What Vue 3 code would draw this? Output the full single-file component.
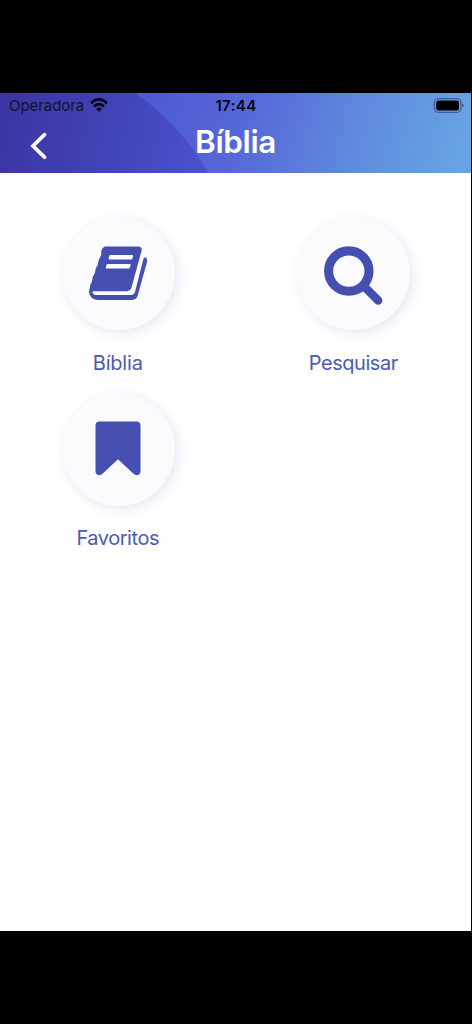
<script setup>
const items = [
  { label: 'Bíblia', icon: 'book', spacing: 'label-book' },
  { label: 'Pesquisar', icon: 'search', spacing: 'label-search' },
  { label: 'Favoritos', icon: 'bookmark', spacing: 'label-bookmark' },
]
</script>

<template>
  <div class="device">
    <div class="screen">
      <header class="header">
        <svg class="backdrop" viewBox="0 0 471 80" preserveAspectRatio="none" aria-hidden="true">
          <defs>
            <linearGradient id="sky" gradientUnits="userSpaceOnUse" x1="130" y1="0" x2="452" y2="86">
              <stop offset="0" stop-color="#4c58cf" />
              <stop offset="0.35" stop-color="#5668d9" />
              <stop offset="0.7" stop-color="#5f8bde" />
              <stop offset="1" stop-color="#67a3e2" />
            </linearGradient>
            <linearGradient id="deep" gradientUnits="userSpaceOnUse" x1="0" y1="20" x2="205" y2="75">
              <stop offset="0" stop-color="#3b34a3" />
              <stop offset="0.5" stop-color="#4143b7" />
              <stop offset="1" stop-color="#4a52cc" />
            </linearGradient>
          </defs>
          <rect width="471" height="80" fill="url(#sky)" />
          <path d="M0 0H135Q179 30 209 80H0Z" fill="url(#deep)" />
        </svg>
        <div class="status">
          <div class="carrier">
            <span class="operator">Operadora</span>
            <svg class="wifi" width="18" height="14" viewBox="0 0 20 14" preserveAspectRatio="none">
              <g fill="none" stroke="#05050f" stroke-width="2.7">
                <path d="M1.2 5.1Q10-2.3 18.8 5.1" />
                <path d="M4.3 8.4Q10 3.8 15.7 8.4" />
              </g>
              <path d="M6.7 10.7Q10 8.2 13.3 10.7L10 13.8Z" fill="#05050f" />
            </svg>
          </div>
          <span class="time">17:44</span>
          <svg class="battery" width="31" height="15" viewBox="0 0 31 15">
            <rect x="1.3" y=".7" width="26.6" height="13.6" rx="4" fill="none" stroke="#3f5c9d" stroke-width="1.3" />
            <rect x="3.2" y="2.6" width="22.8" height="9.8" rx="2.2" fill="#000" />
            <path d="M29.2 5.2Q30.7 6 30.7 7.5T29.2 9.8Z" fill="#3f5c9d" />
          </svg>
        </div>
        <div class="titlebar">
          <svg class="back" width="18" height="28" viewBox="0 0 18 28">
            <path d="M14.5 2.6L3 14L14.5 25.2" fill="none" stroke="#fff" stroke-width="3.7" stroke-linecap="round" stroke-linejoin="miter" />
          </svg>
          <h1>Bíblia</h1>
        </div>
      </header>
      <main class="grid">
        <div v-for="item in items" :key="item.icon" class="tile">
          <div class="disc">
            <svg v-if="item.icon === 'book'" width="60" height="56" viewBox="0 0 60 56" fill="#444fb0">
              <path fill-rule="evenodd" d="M17 1.4H50Q54.6 1.4 53.5 6L43.5 42.6Q42.5 46 39 46.2H6Q4 46.2 4.6 48Q5.2 50 8 50H43Q46 50 47 47L55.4 14Q56 12.2 57.4 12.6Q59.8 13.5 59 17L49.7 50.6Q48.5 54.9 44 54.9H10Q4 54.9 1.8 50Q.3 46 1.9 42.7Q1.8 39.9 3.2 38Q4.4 36.3 4.4 34.1Q4.4 31.7 5.8 30Q7.1 28.3 7.3 26Q7.4 23.3 8.8 21.6Q10 20 10.2 17.5Q10.4 14.5 11.8 13Q13.3 11.1 13.3 7.5Q13 5 14.5 3.4Q15.7 1.7 17 1.4ZM22.4 10.1Q21.5 10.1 21.2 11L20.7 13.4Q20.5 14.5 21.6 14.5H43.2Q44.2 14.5 44.4 13.6L45.1 11.2Q45.3 10.1 44.3 10.1ZM19.8 19.1Q18.8 19.1 18.5 20L17.8 22.5Q17.6 23.6 18.6 23.6H40.7Q41.6 23.6 41.9 22.6L42.6 20.2Q42.8 19.1 41.8 19.1Z" />
            </svg>
            <svg v-else-if="item.icon === 'search'" width="60" height="60" viewBox="0 0 60 60" fill="none" stroke="#444fb0">
              <circle cx="25.8" cy="26.1" r="20.2" stroke-width="9.1" />
              <path d="M40 40.3L55.2 55.5" stroke-width="8.4" stroke-linecap="round" />
            </svg>
            <svg v-else width="46" height="55" viewBox="0 0 46 55">
              <path d="M4.6 .6H41.4Q45.5 .6 45.5 4.7V50Q45.5 54 42 54.2Q40 54.2 38.2 52.6L23 38.3L7.8 52.6Q6 54.2 4 54.2Q.5 54 .5 50V4.7Q.5 .6 4.6 .6Z" fill="#444fb0" />
            </svg>
          </div>
          <span class="label" :class="item.spacing">{{ item.label }}</span>
        </div>
      </main>
    </div>
  </div>
</template>

<style>
body {
  background: #000;
}
</style>

<style scoped>
.device {
  box-sizing: border-box;
  width: 472px;
  height: 1024px;
  padding: 93px 1px 93px 0;
  background: #000;
  font-family: Inter, "Liberation Sans", sans-serif;
  overflow: hidden;
}
.screen {
  height: 838px;
  background: #fff;
}
.header {
  position: relative;
  height: 80px;
}
.backdrop {
  position: absolute;
  inset: 0;
  width: 471px;
  height: 80px;
}
.status {
  position: relative;
  display: grid;
  grid-template-columns: 1fr auto 1fr;
  align-items: center;
  height: 25px;
  padding: 0 7px 0 9px;
  color: #05050f;
}
.carrier {
  display: flex;
  align-items: center;
  gap: 6px;
}
.operator {
  font-size: 15px;
  letter-spacing: -0.06px;
  line-height: 25px;
  color: #12122e;
}
.wifi {
  display: block;
  margin-top: -1px;
}
.time {
  font-size: 15px;
  font-weight: 600;
  letter-spacing: 0.4px;
  line-height: 25px;
  margin-left: -1px;
}
.battery {
  display: block;
  justify-self: end;
  margin-top: -1px;
}
.titlebar {
  position: relative;
  display: grid;
  grid-template-columns: 60px 1fr 60px;
  height: 55px;
}
.back {
  margin: 14px 0 0 30px;
}
h1 {
  margin: 4px 0 0;
  font-size: 31.5px;
  font-weight: 600;
  line-height: 40px;
  letter-spacing: -0.4px;
  text-align: center;
  color: #fff;
}
.grid {
  display: grid;
  grid-template-columns: 1fr 1fr;
  grid-auto-rows: 175.5px;
  padding-top: 44px;
}
.tile {
  display: flex;
  flex-direction: column;
  align-items: center;
}
.disc {
  box-sizing: border-box;
  width: 113px;
  height: 113px;
  margin-left: 1px;
  padding: 28px 1px 0 0;
  display: flex;
  justify-content: center;
  align-items: flex-start;
  border-radius: 50%;
  background: #fbfbfe;
  box-shadow: 4px 4px 12px rgba(68, 79, 190, 0.1), 0 0 8px rgba(68, 79, 190, 0.03);
}
.label {
  margin-top: 20px;
  font-size: 20px;
  line-height: 26px;
  color: #4c5ab6;
}
.label-book {
  letter-spacing: -0.2px;
}
.label-search {
  letter-spacing: -0.45px;
}
.label-bookmark {
  margin-top: 19.4px;
  letter-spacing: -0.45px;
}
</style>
